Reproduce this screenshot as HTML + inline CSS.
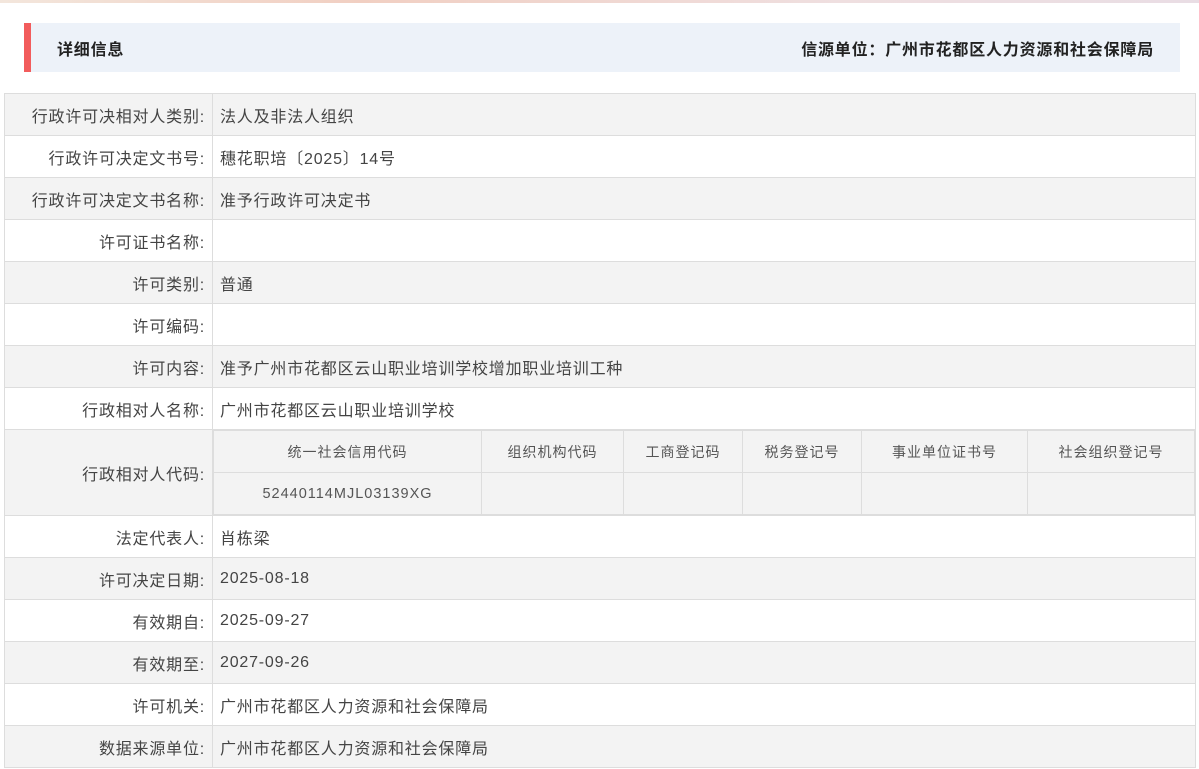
<!DOCTYPE html>
<html><head><meta charset="utf-8"><style>
*{margin:0;padding:0;box-sizing:border-box}
body{width:1199px;height:769px;background:#fff;font-family:"Liberation Sans","Noto Sans CJK SC",sans-serif;color:#333;position:relative;overflow:hidden}
.top{position:absolute;left:0;top:0;width:1199px;height:3px;background:linear-gradient(90deg,#f3e6dc,#f1cfc2 30%,#efdfe0 70%,#e9dde4)}
.hd{position:absolute;left:24px;top:23px;width:1156px;height:49px;background:#edf2f9;border-left:7px solid #f25c5c;font-size:16px;font-weight:bold;color:#222;letter-spacing:0.8px}
.hd .l{position:absolute;left:26px;top:13px}
.hd .r{position:absolute;right:26px;top:13px}
table.m{position:absolute;left:4px;top:93px;width:1192px;border-collapse:collapse;font-size:16px;letter-spacing:0.8px}
table.m td{border:1px solid #ddd;height:42px;padding:0 7px;color:#444}
table.m td.k{width:209px;text-align:right;padding-right:7px}
tr.g td{background:#f3f3f3}
table.s{width:982px;border-collapse:collapse;font-size:14px;letter-spacing:1px}
table.s td{height:42px;border:1px solid #ddd;text-align:center;background:#f3f3f3;padding:0;color:#555}
table.s tr+tr td{font-size:14.5px}
</style></head><body>
<div class="top"></div>
<div class="hd"><span class="l">详细信息</span><span class="r">信源单位：广州市花都区人力资源和社会保障局</span></div>
<table class="m">
<tr class="g"><td class="k">行政许可决相对人类别:</td><td>法人及非法人组织</td></tr>
<tr><td class="k">行政许可决定文书号:</td><td>穗花职培〔2025〕14号</td></tr>
<tr class="g"><td class="k">行政许可决定文书名称:</td><td>准予行政许可决定书</td></tr>
<tr><td class="k">许可证书名称:</td><td></td></tr>
<tr class="g"><td class="k">许可类别:</td><td>普通</td></tr>
<tr><td class="k">许可编码:</td><td></td></tr>
<tr class="g"><td class="k">许可内容:</td><td>准予广州市花都区云山职业培训学校增加职业培训工种</td></tr>
<tr><td class="k">行政相对人名称:</td><td>广州市花都区云山职业培训学校</td></tr>
<tr class="g"><td class="k">行政相对人代码:</td><td style="padding:0">
<table class="s"><tr><td style="width:268px">统一社会信用代码</td><td style="width:142px">组织机构代码</td><td style="width:119px">工商登记码</td><td style="width:119px">税务登记号</td><td style="width:166px">事业单位证书号</td><td>社会组织登记号</td></tr>
<tr><td>52440114MJL03139XG</td><td></td><td></td><td></td><td></td><td></td></tr></table></td></tr>
<tr><td class="k">法定代表人:</td><td>肖栋梁</td></tr>
<tr class="g"><td class="k">许可决定日期:</td><td>2025-08-18</td></tr>
<tr><td class="k">有效期自:</td><td>2025-09-27</td></tr>
<tr class="g"><td class="k">有效期至:</td><td>2027-09-26</td></tr>
<tr><td class="k">许可机关:</td><td>广州市花都区人力资源和社会保障局</td></tr>
<tr class="g"><td class="k">数据来源单位:</td><td>广州市花都区人力资源和社会保障局</td></tr>
</table>
</body></html>
